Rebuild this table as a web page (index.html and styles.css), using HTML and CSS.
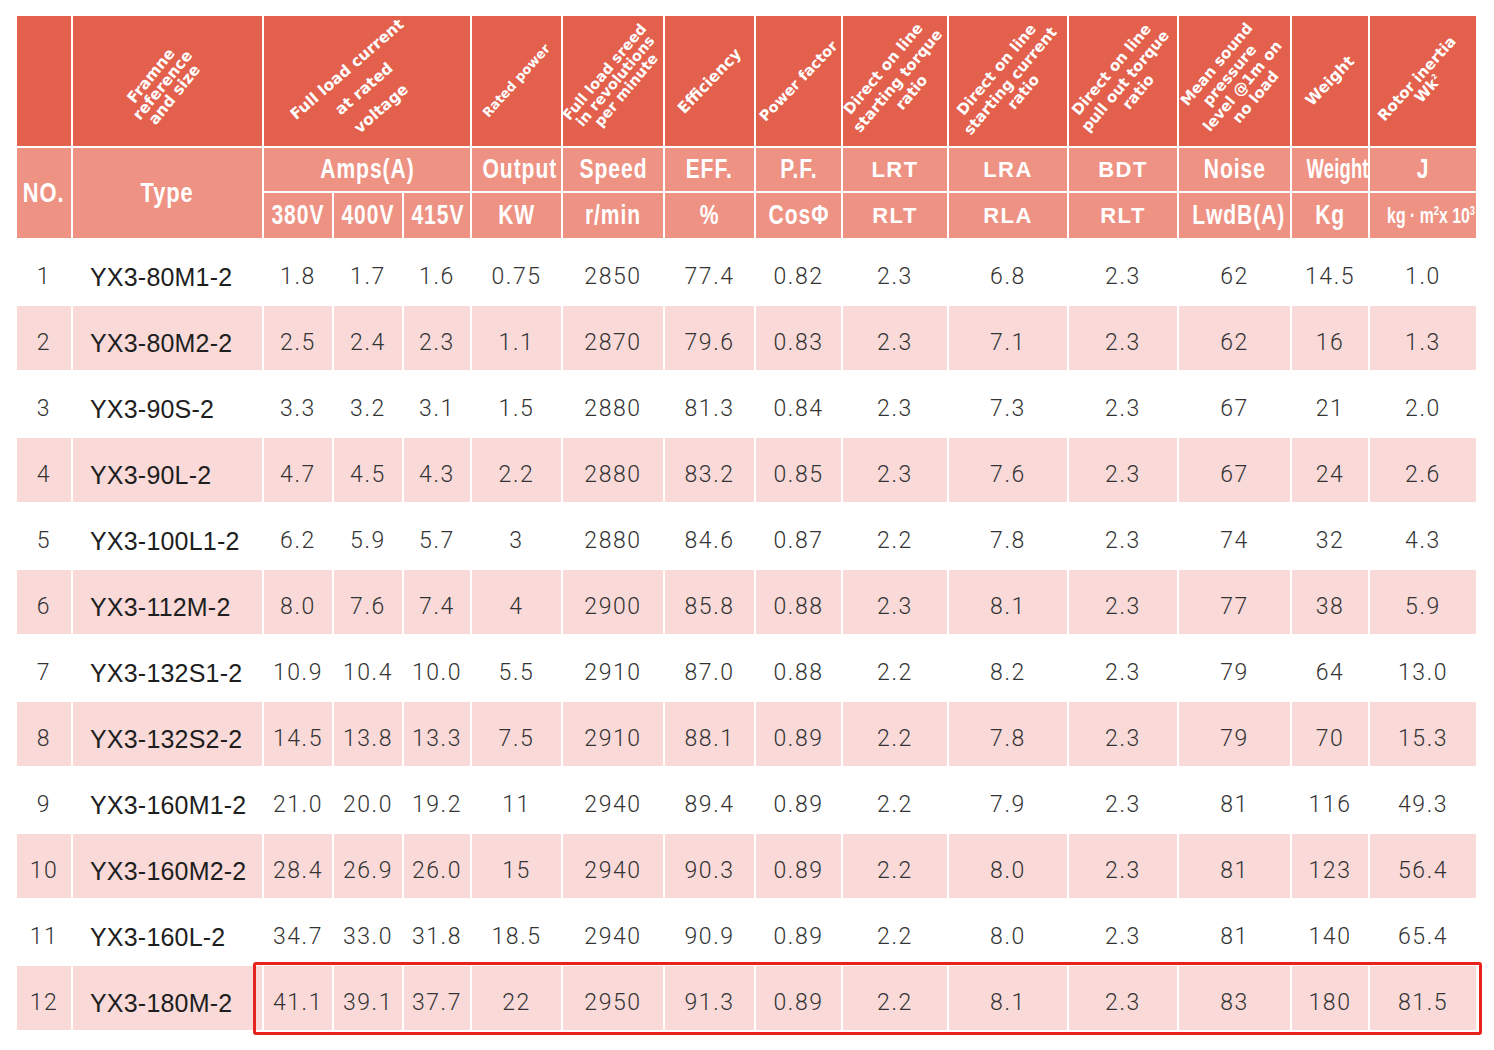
FILE: index.html
```html
<!DOCTYPE html>
<html>
<head>
<meta charset="utf-8">
<link rel="stylesheet" href="styles.css">
</head>
<body>
<div class="wrap">
<table class="spec">
<colgroup>
<col style="width:55px"><col style="width:191px"><col style="width:70px"><col style="width:70px"><col style="width:68px"><col style="width:91px"><col style="width:102px"><col style="width:91px"><col style="width:87px"><col style="width:106px"><col style="width:120px"><col style="width:110px"><col style="width:113px"><col style="width:78px"><col style="width:107px">
</colgroup>
<thead>
<tr class="h1">
<th></th>
<th><div class="rot"><span class="framne">Framne<br>reference<br>and size</span></div></th>
<th colspan="3"><div class="rot"><span class="flc">Full load current<br>at rated<br>voltage</span></div></th>
<th><div class="rot"><span class="small">Rated power</span></div></th>
<th><div class="rot"><span class="fls">Full load sreed<br>in revolutions<br>per minute</span></div></th>
<th><div class="rot"><span class="big-rot">Efficiency</span></div></th>
<th><div class="rot"><span>Power factor</span></div></th>
<th><div class="rot"><span class="dol wide-lh">Direct on line<br>starting torque<br>ratio</span></div></th>
<th><div class="rot"><span class="dol">Direct on line<br>starting current<br>ratio</span></div></th>
<th><div class="rot"><span class="dol">Direct on line<br>pull out torque<br>ratio</span></div></th>
<th><div class="rot"><span class="mean">Mean sound<br>pressure<br>level @1m on<br>no load</span></div></th>
<th><div class="rot"><span class="big-rot">Weight</span></div></th>
<th><div class="rot"><span class="rotor">Rotor inertia<br>Wk<sup>2</sup></span></div></th>
</tr>
<tr class="h2">
<th rowspan="2" class="cond big"><span>NO.</span></th>
<th rowspan="2" class="cond big"><span>Type</span></th>
<th colspan="3" class="cond"><span>Amps(A)</span></th>
<th class="cond"><span>Output</span></th>
<th class="cond"><span>Speed</span></th>
<th class="cond"><span>EFF.</span></th>
<th class="cond"><span>P.F.</span></th>
<th class="wide">LRT</th>
<th class="wide">LRA</th>
<th class="wide">BDT</th>
<th class="cond"><span>Noise</span></th>
<th class="cond tight"><span>Weight</span></th>
<th class="cond"><span>J</span></th>
</tr>
<tr class="h3">
<th class="cond"><span>380V</span></th>
<th class="cond"><span>400V</span></th>
<th class="cond"><span>415V</span></th>
<th class="cond"><span>KW</span></th>
<th class="cond"><span>r/min</span></th>
<th class="cond"><span>%</span></th>
<th class="cond"><span>CosΦ</span></th>
<th class="wide">RLT</th>
<th class="wide">RLA</th>
<th class="wide">RLT</th>
<th class="cond"><span>LwdB(A)</span></th>
<th class="cond"><span>Kg</span></th>
<th class="cond unit"><span>kg · m<sup>2</sup>x 10<sup>3</sup></span></th>
</tr>
</thead>
<tbody>
<tr><td>1</td><td class="type">YX3-80M1-2</td><td>1.8</td><td>1.7</td><td>1.6</td><td>0.75</td><td>2850</td><td>77.4</td><td>0.82</td><td>2.3</td><td>6.8</td><td>2.3</td><td>62</td><td>14.5</td><td>1.0</td></tr>
<tr><td>2</td><td class="type">YX3-80M2-2</td><td>2.5</td><td>2.4</td><td>2.3</td><td>1.1</td><td>2870</td><td>79.6</td><td>0.83</td><td>2.3</td><td>7.1</td><td>2.3</td><td>62</td><td>16</td><td>1.3</td></tr>
<tr><td>3</td><td class="type">YX3-90S-2</td><td>3.3</td><td>3.2</td><td>3.1</td><td>1.5</td><td>2880</td><td>81.3</td><td>0.84</td><td>2.3</td><td>7.3</td><td>2.3</td><td>67</td><td>21</td><td>2.0</td></tr>
<tr><td>4</td><td class="type">YX3-90L-2</td><td>4.7</td><td>4.5</td><td>4.3</td><td>2.2</td><td>2880</td><td>83.2</td><td>0.85</td><td>2.3</td><td>7.6</td><td>2.3</td><td>67</td><td>24</td><td>2.6</td></tr>
<tr><td>5</td><td class="type">YX3-100L1-2</td><td>6.2</td><td>5.9</td><td>5.7</td><td>3</td><td>2880</td><td>84.6</td><td>0.87</td><td>2.2</td><td>7.8</td><td>2.3</td><td>74</td><td>32</td><td>4.3</td></tr>
<tr><td>6</td><td class="type">YX3-112M-2</td><td>8.0</td><td>7.6</td><td>7.4</td><td>4</td><td>2900</td><td>85.8</td><td>0.88</td><td>2.3</td><td>8.1</td><td>2.3</td><td>77</td><td>38</td><td>5.9</td></tr>
<tr><td>7</td><td class="type">YX3-132S1-2</td><td>10.9</td><td>10.4</td><td>10.0</td><td>5.5</td><td>2910</td><td>87.0</td><td>0.88</td><td>2.2</td><td>8.2</td><td>2.3</td><td>79</td><td>64</td><td>13.0</td></tr>
<tr><td>8</td><td class="type">YX3-132S2-2</td><td>14.5</td><td>13.8</td><td>13.3</td><td>7.5</td><td>2910</td><td>88.1</td><td>0.89</td><td>2.2</td><td>7.8</td><td>2.3</td><td>79</td><td>70</td><td>15.3</td></tr>
<tr><td>9</td><td class="type">YX3-160M1-2</td><td>21.0</td><td>20.0</td><td>19.2</td><td>11</td><td>2940</td><td>89.4</td><td>0.89</td><td>2.2</td><td>7.9</td><td>2.3</td><td>81</td><td>116</td><td>49.3</td></tr>
<tr><td>10</td><td class="type">YX3-160M2-2</td><td>28.4</td><td>26.9</td><td>26.0</td><td>15</td><td>2940</td><td>90.3</td><td>0.89</td><td>2.2</td><td>8.0</td><td>2.3</td><td>81</td><td>123</td><td>56.4</td></tr>
<tr><td>11</td><td class="type">YX3-160L-2</td><td>34.7</td><td>33.0</td><td>31.8</td><td>18.5</td><td>2940</td><td>90.9</td><td>0.89</td><td>2.2</td><td>8.0</td><td>2.3</td><td>81</td><td>140</td><td>65.4</td></tr>
<tr><td>12</td><td class="type">YX3-180M-2</td><td>41.1</td><td>39.1</td><td>37.7</td><td>22</td><td>2950</td><td>91.3</td><td>0.89</td><td>2.2</td><td>8.1</td><td>2.3</td><td>83</td><td>180</td><td>81.5</td></tr>
</tbody>
</table>
<div class="highlight"></div>
</div>
</body>
</html>
```
FILE: styles.css
```css
html, body {
  margin: 0;
  padding: 0;
  background: #ffffff;
}
body {
  padding: 16px 0 19px 17px;
  font-family: "Liberation Sans", Arial, sans-serif;
}
.wrap {
  position: relative;
  width: 1459px;
}
.spec {
  width: 1459px;
  table-layout: fixed;
  border-collapse: collapse;
}
.spec th, .spec td {
  border: 2px solid #ffffff;
  padding: 0;
  overflow: visible;
}
.spec thead tr:first-child th { border-top: 0; }
.spec tr > :first-child { border-left: 0; }
.spec tr > :last-child { border-right: 0; }
.h1 { height: 131px; }
.h1 th {
  background: #e3604c;
  color: #ffffff;
  padding: 0;
}
.rot {
  height: 129px;
  display: flex;
  align-items: center;
  justify-content: center;
  overflow: visible;
}
.rot span {
  flex: none;
  display: block;
  white-space: nowrap;
  text-align: center;
  transform: rotate(-46deg);
  font-family: "DejaVu Sans", "Liberation Sans", sans-serif;
  font-weight: 700;
  font-size: 14.5px;
  line-height: 16px;
  letter-spacing: 0;
}
.rot .framne { font-size: 15.5px; line-height: 15px; transform: translate(-4px, 4px) rotate(-51deg); }
.rot .flc { font-size: 15.5px; line-height: 26px; transform: translate(-3px, 8px) rotate(-41deg); }
.rot .small { font-size: 13px; transform: rotate(-48deg); }
.rot .fls { font-size: 14.5px; line-height: 14px; transform: translate(2px, 0) rotate(-50deg); }
.rot .dol { font-size: 15px; line-height: 17.5px; transform: translate(2px, 0) rotate(-50deg); }
.rot .wide-lh { line-height: 18.5px; }
.rot .mean { font-size: 15px; line-height: 17px; transform: translate(2px, 0) rotate(-50deg); }
.rot .big-rot { font-size: 15.5px; transform: rotate(-46deg); }
.rot .rotor { font-size: 15px; line-height: 15px; transform: translate(0, 3px) rotate(-48deg); }
.rot sup {
  font-size: 7px;
  vertical-align: 6px;
  line-height: 0;
}
.h2 { height: 45px; }
.h3 { height: 47px; }
.h2 th, .h3 th {
  background: #ee9284;
  color: #ffffff;
  text-align: center;
  vertical-align: middle;
  white-space: nowrap;
}
.cond {
  font-family: "Liberation Sans", Arial, sans-serif;
  font-weight: 700;
  font-size: 27px;
  letter-spacing: 1.2px;
}
.cond span {
  display: inline-block;
  transform: scaleX(0.78);
}
.tight span { transform: scaleX(0.68); letter-spacing: 0.3px; }
.big { font-size: 28px; }
.unit { font-size: 22px; letter-spacing: 0; }
.unit span { transform: scaleX(0.72); }
.unit sup {
  font-size: 13px;
  vertical-align: 8px;
  line-height: 0;
}
.wide {
  font-family: "Liberation Sans", Arial, sans-serif;
  font-weight: 700;
  font-size: 22px;
  letter-spacing: 1.5px;
}
.spec tbody tr { height: 66px; }
.spec tbody tr:nth-child(even) td { background: #f9dad9; }
.spec td {
  text-align: center;
  vertical-align: middle;
  padding-top: 10px;
  font-family: "Roboto", "Liberation Sans", sans-serif;
  font-weight: 300;
  font-size: 23px;
  color: #333333;
  letter-spacing: 1.6px;
  line-height: 26px;
}
.spec td.type {
  text-align: left;
  padding-left: 17px;
  font-family: "Liberation Sans", Arial, sans-serif;
  font-weight: 400;
  font-size: 25px;
  color: #1e1e1e;
  letter-spacing: 0.2px;
}
.highlight {
  position: absolute;
  left: 236px;
  top: 946px;
  width: 1223px;
  height: 67px;
  border: 3px solid #e8231d;
  border-radius: 3px;
  pointer-events: none;
}
```
